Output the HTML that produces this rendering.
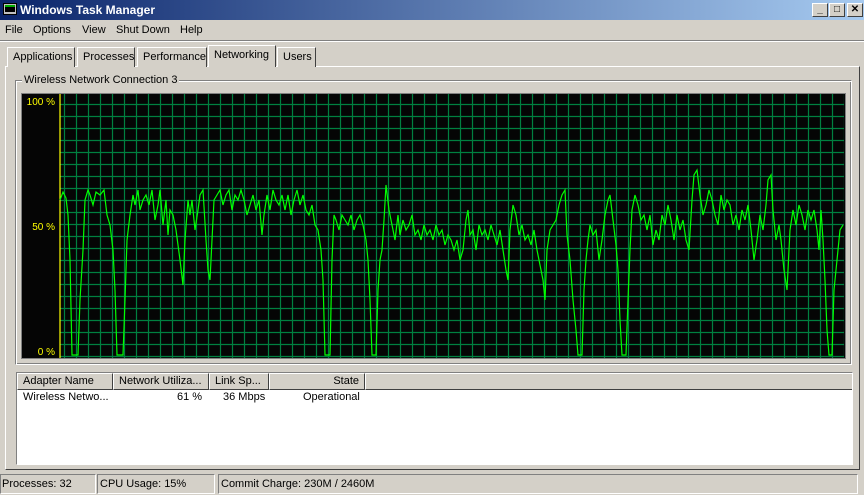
<!DOCTYPE html>
<html><head><meta charset="utf-8"><style>
*{margin:0;padding:0;box-sizing:border-box}
body{width:864px;height:495px;background:#d4d0c8;font-family:"Liberation Sans",sans-serif;font-size:11px;color:#000;position:relative;overflow:hidden}
.abs{position:absolute}
.title{left:0;top:0;width:864px;height:20px;background:linear-gradient(90deg,#0a246a,#a6caf0);color:#fff;font-weight:bold;font-size:12px;line-height:20px;padding-left:20px}
.btn{top:3px;width:16px;height:14px;background:#d4d0c8;border:1px solid;border-color:#fff #404040 #404040 #fff;font-size:10px;font-weight:bold;text-align:center;line-height:12px;color:#000}
.menu span{position:absolute;top:24px}
.tab{top:47px;height:20px;border:1px solid;border-color:#fff #404040 transparent #fff;border-bottom:none;line-height:18px;padding:0 5px;background:#d4d0c8}
.raised{border:1px solid;border-color:#fff #404040 #404040 #fff}
.sunk{border:1px solid;border-color:#808080 #fff #fff #808080}
.hdr{top:0;height:17px;border:1px solid;border-color:#fff #404040 #404040 #fff;line-height:15px;padding:0 5px;background:#d4d0c8}
</style></head><body>
<div class="abs title">Windows Task Manager</div>
<div class="abs" style="left:3px;top:3px;width:14px;height:12px;background:#c0c0c0;border:1px solid #000"><div style="margin:1px;width:10px;height:7px;background:#000;border-top:2px solid #0a0"></div></div>
<div class="abs btn" style="left:812px">_</div>
<div class="abs btn" style="left:829px">□</div>
<div class="abs btn" style="left:847px">✕</div>
<div class="menu"><span style="left:5px">File</span><span style="left:33px">Options</span><span style="left:82px">View</span><span style="left:116px">Shut Down</span><span style="left:180px">Help</span></div>
<div class="abs" style="left:0;top:40px;width:864px;height:2px;border-top:1px solid #808080;border-bottom:1px solid #fff"></div>
<div class="abs raised" style="left:5px;top:66px;width:855px;height:404px;border-top-color:#fff"></div>
<div class="abs tab" style="left:7px;width:68px">Applications</div>
<div class="abs tab" style="left:77px;width:58px">Processes</div>
<div class="abs tab" style="left:137px;width:70px">Performance</div>
<div class="abs tab" style="left:208px;top:45px;height:22px;width:68px;z-index:2">Networking</div>
<div class="abs tab" style="left:277px;width:39px">Users</div>
<div class="abs" style="left:15px;top:80px;width:837px;height:285px;border:1px solid;border-color:#808080 #fff #fff #808080;box-shadow:inset 1px 1px 0 #fff,inset -1px -1px 0 #808080"></div>
<div class="abs" style="left:22px;top:74px;padding:0 2px;background:#d4d0c8">Wireless Network Connection 3</div>
<svg class="abs" style="left:21px;top:93px" width="825" height="266">
<defs><pattern id="g" x="-21" y="-93" width="12" height="12" patternUnits="userSpaceOnUse"><path d="M4.5 0V12M0 8.5H12" stroke="#008040" stroke-width="1.2"/></pattern></defs>
<rect x="0" y="0" width="825" height="266" fill="#808080"/>
<rect x="1" y="1" width="823" height="264" fill="#050505"/>
<rect x="39" y="1" width="784" height="264" fill="url(#g)"/>
<line x1="39" y1="1" x2="39" y2="265" stroke="#ffff00" stroke-width="1.2"/>
<g fill="#ffff00" font-family="Liberation Sans,sans-serif" font-size="10" text-anchor="end"><text x="34" y="12">100 %</text><text x="34" y="137">50 %</text><text x="34" y="262">0 %</text></g>
<g transform="translate(-21,-93)"><polyline fill="none" stroke="#00ff00" stroke-width="1.2" points="60,200 63,192 66,198 68,215 70,260 72,355 78,355 80,300 83,250 85,200 88,190 90,195 93,205 96,192 100,195 104,190 107,215 110,225 113,250 115,290 117,355 123,355 125,300 127,240 130,215 133,195 135,205 138,190 140,210 143,200 146,195 149,205 152,190 155,220 158,205 160,190 163,225 166,200 168,235 170,210 173,215 176,230 180,260 183,285 185,240 188,200 190,215 192,200 195,230 198,210 200,195 203,190 206,240 208,270 210,280 212,240 214,200 217,195 220,190 223,205 226,195 229,190 232,210 235,195 238,200 241,190 244,200 247,215 250,205 253,195 256,210 259,200 262,235 264,215 267,195 270,210 273,190 276,200 279,205 282,195 285,210 288,195 291,215 294,200 297,190 300,205 303,195 306,210 309,215 312,205 315,225 318,230 321,250 323,280 325,355 330,355 332,260 334,215 336,220 339,230 342,215 345,220 348,225 351,215 354,230 357,220 360,215 363,225 366,240 368,260 370,300 372,355 376,355 378,290 380,260 382,250 384,220 386,185 389,210 392,225 395,240 398,215 400,235 403,220 406,230 409,225 412,215 415,235 418,230 421,240 424,225 427,235 430,230 433,240 436,225 439,235 442,230 445,245 448,235 451,240 454,250 457,240 460,260 463,250 466,220 468,210 470,235 473,230 476,250 479,225 482,235 485,230 488,240 491,225 494,235 497,245 500,230 503,250 506,270 508,280 510,230 513,205 516,215 519,235 522,225 525,240 528,235 531,245 534,230 537,250 540,265 543,280 545,300 547,250 550,230 553,225 556,220 559,205 562,195 565,190 567,235 570,260 573,300 576,330 578,355 582,355 584,290 586,260 588,240 590,225 593,235 596,230 599,260 602,240 605,215 608,200 610,195 613,220 616,245 618,270 620,320 622,355 626,355 628,300 630,250 632,210 635,195 638,205 641,220 644,215 647,230 650,215 653,245 656,230 659,240 662,215 665,225 668,205 671,220 674,240 677,215 680,230 683,220 686,240 689,250 692,200 694,175 697,170 700,195 703,215 706,205 709,190 712,200 715,215 718,225 721,195 724,210 727,200 730,205 733,225 736,215 739,230 742,210 745,220 748,205 751,230 754,260 757,240 760,215 763,230 766,205 768,180 771,175 773,210 776,240 779,225 781,240 784,270 787,290 790,230 793,210 796,225 799,205 802,215 805,230 808,210 811,220 814,210 817,230 819,250 821,210 823,240 825,280 827,330 829,355 832,355 834,290 836,270 838,250 840,230 843,225"/></g>
</svg>
<div class="abs" style="left:16px;top:372px;width:837px;height:93px;background:#fff;border:1px solid;border-color:#808080 #fff #fff #808080;overflow:hidden">
<div class="abs hdr" style="left:0;width:96px">Adapter Name</div>
<div class="abs hdr" style="left:96px;width:96px">Network Utiliza...</div>
<div class="abs hdr" style="left:192px;width:60px">Link Sp...</div>
<div class="abs hdr" style="left:252px;width:96px;text-align:right">State</div>
<div class="abs hdr" style="left:348px;width:500px"></div>
<div class="abs" style="left:6px;top:18px">Wireless Netwo...</div>
<div class="abs" style="left:160px;top:18px">61 %</div>
<div class="abs" style="left:206px;top:18px">36 Mbps</div>
<div class="abs" style="left:286px;top:18px">Operational</div>
</div>
<div class="abs sunk" style="left:0;top:474px;width:96px;height:20px;line-height:18px;padding-left:1px">Processes: 32</div>
<div class="abs sunk" style="left:97px;top:474px;width:118px;height:20px;line-height:18px;padding-left:2px">CPU Usage: 15%</div>
<div class="abs sunk" style="left:218px;top:474px;width:640px;height:20px;line-height:18px;padding-left:2px">Commit Charge: 230M / 2460M</div>
</body></html>
